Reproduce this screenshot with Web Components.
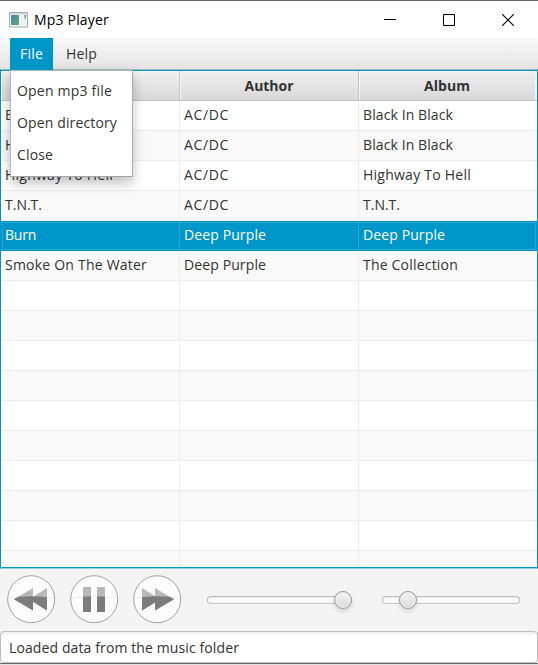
<!DOCTYPE html>
<html lang="en">
<head>
<meta charset="utf-8">
<title>Mp3 Player</title>
<style>
html,body{margin:0;height:100%;overflow:hidden}
body{font:14px/20px "Open Sans","Noto Sans",sans-serif;color:#333;background:#f4f4f4}
</style>
</head>
<body>
<player-window></player-window>
<script>
const define=(name,html,init)=>customElements.define(name,class extends HTMLElement{
  connectedCallback(){
    if(this.shadowRoot)return;
    const root=this.attachShadow({mode:'open'});
    const t=document.createElement('template');
    t.innerHTML=typeof html==='function'?html(this):html;
    root.append(t.content.cloneNode(true));
    if(init)init(this,root);
  }
});

// Text run spaced to occupy a given width
define('fit-text',`<style>:host{display:inline-block;white-space:nowrap}span{display:inline-block}</style><span><slot></slot></span>`,(el,root)=>{
  const s=root.querySelector('span'),w=+el.getAttribute('w');
  if(w)s.style.letterSpacing=((w-s.getBoundingClientRect().width)/el.textContent.length)+'px';
});

define('title-bar',`<style>
:host{display:flex;align-items:center;height:38px;box-sizing:border-box;background:#fff;border-top:1px solid #69696b;color:#000;padding:0 1px 0 9px}
fit-text{margin-left:6px;flex:1;padding-top:1px}
svg{display:block}.btn{width:59px;display:flex;justify-content:center}
</style>
<svg width="19" height="16" viewBox="0 0 19 16"><defs><linearGradient id="g" x2="1" y2="1"><stop stop-color="#4a83b5"/><stop offset="1" stop-color="#5fae6b"/></linearGradient></defs>
<path d="M.5 .5h18v14.5H.5z" fill="#f4f6f8" stroke="#a3a9b0"/><path d="M1 1h17v1.5H1z" fill="#d0d5da"/><path d="M2 3h8v10H2z" fill="url(#g)"/><path d="M11 3h6v10h-6z" fill="#eef1f5"/><path d="M15 3h2v5q-2-2-2-5z" fill="#69a99b"/></svg>
<fit-text w="75">Mp3 Player</fit-text>
<div class="btn"><svg width="12" height="12"><path d="M0 5.5h12" stroke="#000"/></svg></div>
<div class="btn"><svg width="12" height="12"><path d="M.5 .5h11v11H.5z" fill="none" stroke="#000"/></svg></div>
<div class="btn"><svg width="12" height="12"><path d="M0 0l12 12M12 0L0 12" stroke="#000" stroke-width="1.1"/></svg></div>`);

define('menu-bar',`<style>
:host{display:flex;height:31px;box-sizing:border-box;padding-left:10px;background:linear-gradient(#fafafa,#e4e4e4)}
</style><slot></slot>`);
define('menu-title',`<style>
:host{display:flex;align-items:center;padding:0 10px;height:32px;box-sizing:border-box}
:host([open]){background:#0096c9;color:#fff;position:relative;z-index:2}
</style><slot></slot>`);
define('menu-popup',`<style>
:host{display:block;position:absolute;left:10px;top:70px;width:123px;height:107px;box-sizing:border-box;background:#fff;border:1px solid #b5b5b5;border-right-color:#b0b0b0;border-bottom-color:#a5a5a5;padding:4px 0 0 6px;z-index:3;box-shadow:0 6px 11px rgba(0,0,0,.25)}
</style><slot></slot>`);
define('menu-entry',`<style>:host{display:flex;height:32px;align-items:center}</style><slot></slot>`);

define('track-row',el=>`<style>
:host{display:grid;grid-template-columns:179px 179px 1fr;height:30px;box-sizing:border-box;flex:none;background:#fff}
:host([alt]){background:#f9f9f9}
div{border-right:1px solid #ededed;border-bottom:1px solid #ededed;padding:4px 0 0 4px;box-sizing:border-box;overflow:hidden}
div:last-child{border-right:0}
:host([selected]){background:#0096c9;color:#fff;box-shadow:inset 0 0 0 1px #0096c9,inset 0 0 0 2px #2aa8d3}
:host([selected]) div{border-right-color:#2aa8d3;border-bottom-color:transparent}
</style>`+[0,1,2].map(i=>{const [t,w]=(el.getAttribute('cells')||'').split('|').map(s=>s.split('~'))[i]||[];return `<div>${t?`<fit-text w="${w}">${t}</fit-text>`:''}</div>`}).join(''));

define('track-table',`<style>
:host{display:flex;flex-direction:column;height:500px;box-sizing:border-box;overflow:hidden;border:1px solid #0096c9;border-top:1px solid #9cb7c2;border-bottom:1px solid #9bd0e3;position:relative}
.head{display:grid;grid-template-columns:179px 179px 177px 1fr;height:31px;flex:none;box-sizing:border-box;border-top:1px solid #0096c9;border-bottom:1px solid #c4c4c4;background:linear-gradient(#f0f0f0,#d9d9d9);font-weight:700}
.head div{text-align:center;padding-top:5px;border-right:1px solid #c4c4c4;box-shadow:inset 1px 1px #f5f5f5}
.head div:nth-child(3){border-color:#f4f4f4}
.head div:last-child{border:0}
.rows{flex:1;overflow:hidden;display:flex;flex-direction:column;border-bottom:1px solid #0096c9}
</style>
<div class="head"><div></div><div><fit-text w="49">Author</fit-text></div><div><fit-text w="46">Album</fit-text></div><div></div></div>
<div class="rows">
<track-row cells="Back In Black~89|AC/DC~45|Black In Black~90"></track-row>
<track-row alt cells="Hells Bells~70|AC/DC~45|Black In Black~90"></track-row>
<track-row cells="Highway To Hell~108|AC/DC~45|Highway To Hell~108"></track-row>
<track-row alt cells="T.N.T.~37|AC/DC~45|T.N.T.~37"></track-row>
<track-row selected cells="Burn~31|Deep Purple~82|Deep Purple~82"></track-row>
<track-row alt cells="Smoke On The Water~142|Deep Purple~82|The Collection~95"></track-row>
</div>`,(el,root)=>{
  const rows=root.querySelector('.rows');
  for(let i=0;i<10;i++){const r=document.createElement('track-row');if(i%2)r.setAttribute('alt','');rows.append(r)}
});

const shapes={
 rewind:'M7 24.2L26 13V35.4zM22 24.2L40 13V35.4z',
 pause:'M13 12h8v25h-8zM27 12h8v25h-8z',
 forward:'M41 24.2L22 13V35.4zM27.5 24.2L9 13V35.4z'
};
define('round-button',el=>`<style>:host{display:block;width:49px;height:49px}svg{display:block}</style>
<svg width="49" height="49"><defs><clipPath id="c"><path d="M0 23.5Q24 19 49 23.5V49H0z"/></clipPath></defs>
<circle cx="24.2" cy="24.2" r="23.5" fill="#fcfcfc" stroke="#999" stroke-width=".9"/>
<path d="M2 23.5Q24 19 47 23.5" fill="none" stroke="#eee"/>
<path d="${shapes[el.getAttribute('kind')]}" fill="#b9b9b9"/><path d="${shapes[el.getAttribute('kind')]}" fill="#7c7c7c" clip-path="url(#c)"/></svg>`);

define('value-slider',el=>`<style>
:host{display:flex;align-items:center;height:18px;position:relative}
.track{flex:1;height:8px;box-sizing:border-box;border:1px solid #bdbdbd;border-bottom-color:#c8c8c8;border-radius:4px;background:linear-gradient(#e9e9e9,#fff 45%,#f3f3f3)}
.thumb{position:absolute;left:${el.getAttribute('at')}px;top:0;width:18px;height:18px;box-sizing:border-box;border:1px solid #999;border-radius:50%;background:linear-gradient(#f3f3f3,#dcdcdc);box-shadow:inset 0 0 0 1px #f1f1f1,0 3px 5px rgba(0,0,0,.13)}
</style><div class="track"></div><div class="thumb"></div>`);

define('control-bar',`<style>
:host{display:flex;height:62px;box-sizing:border-box;padding:6px 18px 0 7px;background:#f4f4f4}
round-button{margin-right:14px}
value-slider{margin-top:16px;width:145px;margin-left:10.7px}
value-slider+value-slider{width:138.5px;margin-left:30px}
</style>
<round-button kind="rewind"></round-button><round-button kind="pause"></round-button><round-button kind="forward"></round-button>
<value-slider at="127.3"></value-slider><value-slider at="17.3"></value-slider>`);

define('status-field',`<style>
:host{display:block;height:32px;box-sizing:border-box;border:1px solid #bdbdbd;border-radius:4px;background:linear-gradient(#eee,#fff 4px);padding:6px 0 0 8px}
</style><slot></slot>`);

define('player-window',`<style>
:host{display:flex;flex-direction:column;width:538px;height:665px;box-sizing:border-box;overflow:hidden;background:#f4f4f4;position:relative}
.edge{height:1px;background:#6a6a6a;border-bottom:1px solid #e2e2e2}
</style>
<title-bar></title-bar>
<menu-bar><menu-title open><fit-text w="23">File</fit-text></menu-title><menu-title style="margin-left:3px"><fit-text w="31">Help</fit-text></menu-title></menu-bar>
<track-table></track-table>
<control-bar></control-bar>
<status-field><fit-text w="230">Loaded data from the music folder</fit-text></status-field>
<div class="edge"></div>
<menu-popup><menu-entry><fit-text w="95">Open mp3 file</fit-text></menu-entry><menu-entry><fit-text w="100">Open directory</fit-text></menu-entry><menu-entry><fit-text w="36">Close</fit-text></menu-entry></menu-popup>`);
</script>
</body>
</html>
